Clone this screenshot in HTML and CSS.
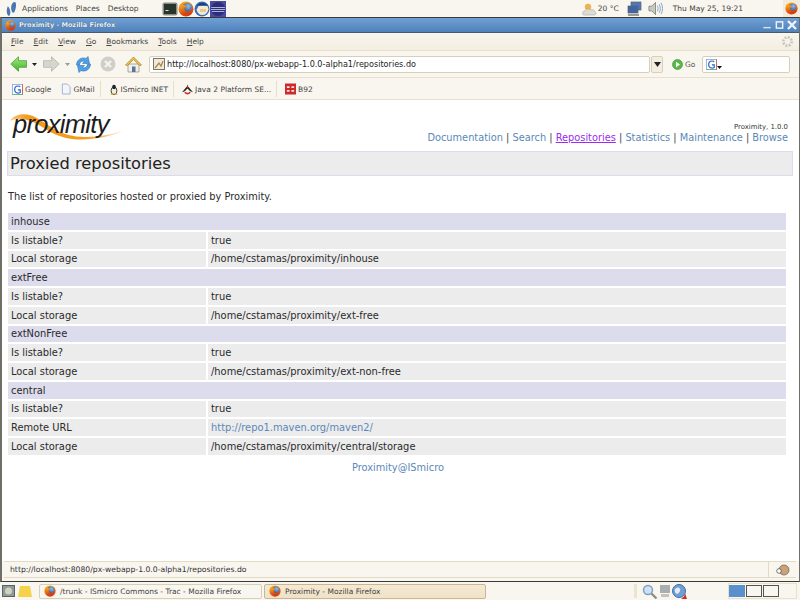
FILE: index.html
```html
<!DOCTYPE html>
<html lang="en">
<head>
    <meta charset="UTF-8">
    <title>Proximity - Mozilla Firefox</title>
    <link rel="stylesheet" href="styles.css">
</head>
<body>
    <svg class="defs" width="0" height="0">
        <defs>
            <radialGradient id="fox-globe" cx="0.6" cy="0.35" r="0.7">
                <stop offset="0" stop-color="#8fc0ec"/>
                <stop offset="1" stop-color="#24509e"/>
            </radialGradient>
            <linearGradient id="fox-tail" x1="0" y1="0" x2="0.4" y2="1">
                <stop offset="0" stop-color="#f9b820"/>
                <stop offset="1" stop-color="#d63c0e"/>
            </linearGradient>
            <linearGradient id="swoosh-fade" x1="0" y1="0" x2="1" y2="0">
                <stop offset="0" stop-color="#fbc77a"/>
                <stop offset="0.15" stop-color="#f59a1c"/>
                <stop offset="0.65" stop-color="#f59a1c"/>
                <stop offset="1" stop-color="#fbe3c4"/>
            </linearGradient>
            <linearGradient id="arrow-green" x1="0" y1="0" x2="0" y2="1">
                <stop offset="0" stop-color="#a4ec7c"/>
                <stop offset="1" stop-color="#3fb02e"/>
            </linearGradient>
            <symbol id="firefox" viewBox="0 0 16 16">
                <circle cx="8" cy="8" r="7.5" fill="url(#fox-tail)"/>
                <circle cx="9.3" cy="6.6" r="4.6" fill="url(#fox-globe)"/>
                <path d="M2 3c1 1 3 1 4 1 1.500 0 3 1 3 2.500C7.500 6 6 7 6.500 8.500c.6 2 3 2.500 5 1.500 1-.5 2-1.500 2.500-3 .3 2-.5 4.500-3 5.800C7 14.500 3 13 2 9.500 1.500 7 1.500 5 2 3z" fill="url(#fox-tail)"/>
            </symbol>
            <symbol id="gicon" viewBox="0 0 14 14">
                <rect x=".5" y=".5" width="13" height="13" fill="#fff" stroke="#7fa4dc"/>
                <path d="M.5 13.500h13" stroke="#5fb35f"/>
                <path d="M13.500.5v13" stroke="#d9483a"/>
                <path d="M10.500 3.500C9.700 2.800 8.800 2.500 7.800 2.500 5.300 2.500 3.400 4.500 3.400 7s1.800 4.500 4.300 4.500c1.100 0 2-.3 2.800-.8V7.500H7.500" fill="none" stroke="#2a5fc8" stroke-width="1.500"/>
            </symbol>
        </defs>
    </svg>

    <header class="panel">
        <div class="panel-left">
            <svg class="foot" width="12" height="16" viewBox="0 0 12 16"><path d="M1.500 6C.3 9 .5 14 3 15c1.700-1 1.800-5 .2-8C2.600 6 1.900 5 1.500 6zM8.500 1C6.200 1 4.800 5 5.300 8.500c.3 3 2.200 4.200 3.200 2.300C9.800 8.500 11.200 1 8.500 1z" fill="#4a76b0"/></svg>
            <span>Applications</span>
            <span>Places</span>
            <span>Desktop</span>
            <div class="launchers">
                <svg width="16" height="16" viewBox="0 0 16 16"><rect x=".5" y="1.500" width="15" height="13" rx="2" fill="#8b8d84"/><rect x="2" y="3" width="12" height="10" fill="#26362c"/><path d="M3.500 9.500h3" stroke="#dfe8dc"/></svg>
                <svg width="16" height="16"><use href="#firefox"/></svg>
                <svg width="16" height="16" viewBox="0 0 16 16"><circle cx="8" cy="8" r="7.5" fill="#3a6db8"/><path d="M2.500 9l2-4 9 0 1 3c-1 4-3 6-6 6-3 0-5-2-6-5z" fill="#f3ead2"/><path d="M3 5c2-4 8-4.500 11 0-3-1.500-7-1.500-11 0z" fill="#1f3f7c"/><path d="M6 8h6v3H6z" fill="#e9c98c"/></svg>
                <svg width="16" height="16" viewBox="0 0 16 16"><rect width="16" height="16" fill="#4a4a9e"/><circle cx="8" cy="8" r="7" fill="#2b2f78"/><path d="M1.200 6.500h13.600M1 8.500h14M1.800 10.500h12.400" stroke="#d4d6f4" stroke-width=".8"/></svg>
            </div>
        </div>
        <div class="panel-right">
            <svg width="15" height="14" viewBox="0 0 15 14"><circle cx="6" cy="5" r="3.200" fill="#eeb64a"/><path d="M2 13c-2 0-2-4 1-4 .5-2 4-3 5-1 2-1 5 0 5 2 2 1 1 3-1 3z" fill="#dcdcd6" stroke="#a8a8a0" stroke-width=".6"/></svg>
            <span class="temp">20 °C</span>
            <svg class="tray-net" width="15" height="16" viewBox="0 0 15 16"><rect x="4" y="1" width="10" height="8" fill="#4f78b4" stroke="#5a6470" stroke-width=".7"/><rect x="1" y="5" width="10" height="7" fill="#3f66a4" stroke="#5a6470" stroke-width=".7"/><path d="M1 13h11v2H1z" fill="#9a9a94"/></svg>
            <svg class="tray-vol" width="15" height="15" viewBox="0 0 16 15"><path d="M1 5h3l4-4v13l-4-4H1z" fill="#c9c9c2" stroke="#77776f" stroke-width=".8"/><path d="M10 4.500c1 2 1 4 0 6M12 3c1.500 3 1.500 6 0 9M14 1.500c2 4 2 8 0 12" fill="none" stroke="#7f9fc8"/></svg>
            <span class="clock">Thu May 25, 19:21</span>
            <div class="panel-fox"><svg width="13" height="13"><use href="#firefox"/></svg></div>
        </div>
    </header>

    <div class="window">
        <div class="titlebar">
            <svg width="11" height="11"><use href="#firefox"/></svg>
            <span class="title-text">Proximity - Mozilla Firefox</span>
            <div class="title-btns">
                <svg width="9" height="10" viewBox="0 0 10 10"><path d="M0 7h9v2H0z" fill="#eef2f6" stroke="#56779f" stroke-width=".5"/></svg>
                <svg width="9" height="10" viewBox="0 0 10 10"><rect x="1.500" y="1.500" width="7" height="7" fill="none" stroke="#eef2f6" stroke-width="1.600"/></svg>
                <svg width="10" height="10" viewBox="0 0 10 10"><path d="M1 1l8 8M9 1L1 9" stroke="#eef2f6" stroke-width="2.400"/></svg>
            </div>
        </div>

        <div class="menubar">
            <span><u>F</u>ile</span>
            <span><u>E</u>dit</span>
            <span><u>V</u>iew</span>
            <span><u>G</u>o</span>
            <span><u>B</u>ookmarks</span>
            <span><u>T</u>ools</span>
            <span><u>H</u>elp</span>
            <svg class="throbber" width="13" height="13" viewBox="0 0 14 14"><circle cx="7" cy="7" r="4.500" fill="none" stroke="#c4c4bb" stroke-width="2.800" stroke-dasharray="2 1.500"/></svg>
        </div>

        <div class="navbar">
            <svg class="nav-back" width="17" height="16" viewBox="0 0 17 16"><path d="M.8 8l7.700-7.300v4h8v6.600h-8v4z" fill="url(#arrow-green)" stroke="#4d9e3c" stroke-width=".8"/></svg>
            <svg class="caret" width="5" height="3" viewBox="0 0 5 3"><path d="M0 0h5L2.500 3z" fill="#222"/></svg>
            <svg class="nav-fwd" width="17" height="16" viewBox="0 0 17 16"><path d="M16.200 8L8.500.7v4h-8v6.600h8v4z" fill="#d6d6ce" stroke="#b4b4aa" stroke-width=".8"/></svg>
            <svg class="caret" width="5" height="3" viewBox="0 0 5 3"><path d="M0 0h5L2.500 3z" fill="#9a9a94"/></svg>
            <svg class="nav-reload" width="17" height="17" viewBox="0 0 17 17"><path d="M1.500 9c0-5 5-8.500 9.500-6.500L13 .5l1.500 7H7.500l2-2C7 4.500 4.500 6 4.500 9z" fill="#4f9fe4" stroke="#2f74bc" stroke-width=".6"/><path d="M15.500 8c0 5-5 8.500-9.500 6.500L4 16.500l-1.500-7h7l-2 2c2.500 1 5-.5 5-3.500z" fill="#4f9fe4" stroke="#2f74bc" stroke-width=".6"/></svg>
            <svg class="nav-stop" width="16" height="16" viewBox="0 0 16 16"><circle cx="8" cy="8" r="7.500" fill="#cfcfc8"/><path d="M5 5l6 6M11 5l-6 6" stroke="#f4f4ef" stroke-width="2.200"/></svg>
            <svg class="nav-home" width="17" height="17" viewBox="0 0 17 17"><path d="M3 8v8h11V8z" fill="#f2f0ea" stroke="#8a8a80" stroke-width=".7"/><path d="M.5 9L8.500 1l8 8-2 .5-6-6-6 6z" fill="#f0c44a" stroke="#a57f22" stroke-width=".7"/><rect x="7" y="10.500" width="3.500" height="5.500" fill="#5f7396"/></svg>
            <div class="urlbar">
                <svg width="12" height="12" viewBox="0 0 12 12"><rect x=".5" y=".5" width="11" height="11" fill="#f0ead8" stroke="#77776f"/><path d="M2 10l4-5 2 3 2-5" fill="none" stroke="#a8874a" stroke-width="1.300"/></svg>
                <span>http://localhost:8080/px-webapp-1.0.0-alpha1/repositories.do</span>
            </div>
            <div class="url-drop"><svg width="7" height="5" viewBox="0 0 7 5"><path d="M0 0h7L3.500 5z" fill="#222"/></svg></div>
            <svg class="go-icon" width="11" height="11" viewBox="0 0 11 11"><circle cx="5.500" cy="5.500" r="5" fill="#58b948" stroke="#3b8c2e" stroke-width=".6"/><path d="M4 2.800l4 2.700-4 2.700z" fill="#fff"/></svg>
            <span class="go-label">Go</span>
            <div class="searchbar">
                <svg width="11" height="11"><use href="#gicon"/></svg>
                <svg class="search-caret" width="5" height="3" viewBox="0 0 5 3"><path d="M0 0h5L2.500 3z" fill="#111"/></svg>
            </div>
        </div>

        <div class="bookmarks">
            <div class="bm"><svg width="11" height="11"><use href="#gicon"/></svg>Google</div>
            <div class="bm"><svg width="10" height="12" viewBox="0 0 11 12"><path d="M1.500.5h5.500l3 3v8h-8.500z" fill="#f2f5fa" stroke="#9db0cc"/></svg>GMail</div>
            <div class="bm-sep"></div>
            <div class="bm"><svg width="10" height="13" viewBox="0 0 12 13"><ellipse cx="6" cy="8" rx="3.500" ry="4.500" fill="#f1efe6" stroke="#222"/><ellipse cx="6" cy="3.500" rx="2.200" ry="2.800" fill="#222"/><path d="M2 12h3M7 12h3" stroke="#e9a81e" stroke-width="1.500"/></svg>ISmicro INET</div>
            <div class="bm-sep"></div>
            <div class="bm"><svg width="11" height="11" viewBox="0 0 12 12"><path d="M0 9l6-7 6 7-3-1-3-3-3 3z" fill="#222"/><path d="M3 9c2 2 4 2 6 0" stroke="#c8322a" fill="none" stroke-width="1.600"/><path d="M6 1v4" stroke="#c8322a"/></svg>Java 2 Platform SE...</div>
            <div class="bm-sep"></div>
            <div class="bm"><svg width="11" height="12" viewBox="0 0 12 12"><rect width="12" height="12" fill="#cc2b2b"/><path d="M2 3h3v2H2zM7 3h3v2H7zM2 7h3v2H2zM7 7h3v2H7z" fill="#f6dede"/></svg>B92</div>
        </div>

        <main class="content">
            <div class="page-head">
                <div class="logo">
                    <svg class="swoosh" width="116" height="30" viewBox="0 0 116 30"><path d="M0 9C4 2 15 0 25 5 40 13 50 25 75 25 90 25 105 22 115 18 100 25 80 29 62 27 45 25 35 16 25 11 17 7 7 5 0 9z" fill="url(#swoosh-fade)"/></svg>
                    <span class="logo-text">proximity</span>
                </div>
                <div class="head-right">
                    <div class="version">Proximity, 1.0.0</div>
                    <nav class="topnav">
                        <a href="#">Documentation</a> |
                        <a href="#">Search</a> |
                        <a href="#" class="current">Repositories</a> |
                        <a href="#">Statistics</a> |
                        <a href="#">Maintenance</a> |
                        <a href="#">Browse</a>
                    </nav>
                </div>
            </div>

            <h1>Proxied repositories</h1>
            <p class="intro">The list of repositories hosted or proxied by Proximity.</p>

            <table class="repos">
                <colgroup><col class="key-col"><col></colgroup>
                <tr><th colspan="2">inhouse</th></tr>
                <tr><td>Is listable?</td><td>true</td></tr>
                <tr><td>Local storage</td><td>/home/cstamas/proximity/inhouse</td></tr>
                <tr><th colspan="2">extFree</th></tr>
                <tr><td>Is listable?</td><td>true</td></tr>
                <tr><td>Local storage</td><td>/home/cstamas/proximity/ext-free</td></tr>
                <tr><th colspan="2">extNonFree</th></tr>
                <tr><td>Is listable?</td><td>true</td></tr>
                <tr><td>Local storage</td><td>/home/cstamas/proximity/ext-non-free</td></tr>
                <tr><th colspan="2">central</th></tr>
                <tr><td>Is listable?</td><td>true</td></tr>
                <tr><td>Remote URL</td><td><a href="#">http://repo1.maven.org/maven2/</a></td></tr>
                <tr><td>Local storage</td><td>/home/cstamas/proximity/central/storage</td></tr>
            </table>

            <div class="foot-link"><a href="#">Proximity@ISmicro</a></div>
        </main>

        <div class="statusbar">
            <span>http://localhost:8080/px-webapp-1.0.0-alpha1/repositories.do</span>
            <div class="status-end"><svg width="14" height="12" viewBox="0 0 14 12"><circle cx="8" cy="6" r="5" fill="#c9a27a" stroke="#6f5a44" stroke-width=".7"/><circle cx="3" cy="7" r="2.300" fill="#fff" stroke="#444" stroke-width=".7"/></svg></div>
        </div>
    </div>

    <footer class="taskbar">
        <div class="show-desk"><svg width="13" height="12" viewBox="0 0 13 12"><rect x=".5" y=".5" width="12" height="11" fill="#8a9a9e" stroke="#59646a"/><circle cx="6.500" cy="6" r="3.500" fill="#d5d1b8"/></svg></div>
        <svg class="notes" width="14" height="11" viewBox="0 0 14 11"><path d="M2 0h10l2 11H0z" fill="#f4d24a"/></svg>
        <div class="task first"><svg width="12" height="12"><use href="#firefox"/></svg><span>/trunk - ISmicro Commons - Trac - Mozilla Firefox</span></div>
        <div class="task active"><svg width="12" height="12"><use href="#firefox"/></svg><span>Proximity - Mozilla Firefox</span></div>
        <div class="tray">
            <div class="grip"></div>
            <svg width="16" height="15" viewBox="0 0 16 15"><circle cx="6" cy="6" r="4.500" fill="#cfe0f2" stroke="#7f9fc4" stroke-width="1.500"/><path d="M9.500 9.500l5 5" stroke="#8a8a84" stroke-width="2.200"/></svg>
            <svg width="10" height="12" viewBox="0 0 10 12"><rect width="10" height="8" fill="#a9aeb0"/><rect x="1" y="9" width="8" height="3" fill="#c4c4be"/></svg>
            <svg width="15" height="15" viewBox="0 0 15 15"><circle cx="7" cy="7" r="6.500" fill="#6f9fd6" stroke="#3f6fa8"/><path d="M3 5c2-2 4-2 5 0s-2 5-3 5-3-3-2-5z" fill="#e4ecf4"/><path d="M13 9c0 3-2 5-4 5l1.500 1H15z" fill="#c8322a"/></svg>
        </div>
        <div class="pager">
            <div class="desk on"></div>
            <div class="desk"></div>
            <div class="desk"></div>
        </div>
    </footer>
</body>
</html>
```

FILE: styles.css
```css
html, body {
    margin: 0;
    padding: 0;
}

body {
    width: 800px;
    height: 600px;
    overflow: hidden;
    display: flex;
    flex-direction: column;
    background-color: #f9f6ef;
    font-family: "DejaVu Sans", sans-serif;
    font-size: 7.5px;
    color: #44443f;
}

.defs {
    position: absolute;
}

svg {
    flex: none;
}

/* gnome panel */
.panel {
    height: 17px;
    flex: none;
    display: flex;
    justify-content: space-between;
    align-items: center;
}

.panel-left {
    display: flex;
    align-items: center;
    gap: 8px;
    padding-left: 6px;
}

.foot {
    margin-right: -4px;
}

.launchers {
    display: flex;
    margin-left: 15px;
}

.panel-right {
    display: flex;
    align-items: center;
}

.temp {
    margin-left: 1px;
}

.tray-net {
    margin-left: 8px;
}

.tray-vol {
    margin-left: 6px;
}

.clock {
    margin-left: 10px;
}

.panel-fox {
    margin-left: 40px;
    width: 17px;
    height: 17px;
    display: flex;
    align-items: center;
    justify-content: center;
    background-color: #f2ebdb;
}

/* window frame */
.window {
    height: 565px;
    flex: none;
    display: flex;
    flex-direction: column;
    box-sizing: border-box;
    border-top: 1px solid #3a3a36;
    border-bottom: 1px solid #3a3a36;
    border-left: 2px solid #6f6f68;
    border-right: 1px solid #6f6f68;
}

.titlebar {
    height: 14px;
    flex: none;
    display: flex;
    align-items: center;
    gap: 3px;
    padding: 0 2px 0 3px;
    background: linear-gradient(#6f9fd4, #4f82bb);
    border-bottom: 1px solid #4b5a6a;
}

.title-text {
    color: #eef1f4;
    font-weight: bold;
    font-size: 6.5px;
    text-shadow: 0 0 1px #2b3f58;
}

.title-btns {
    margin-left: auto;
    display: flex;
    gap: 3px;
}

.menubar {
    height: 17px;
    flex: none;
    display: flex;
    align-items: center;
    gap: 10px;
    padding-left: 9px;
    border-bottom: 1px solid #e8e0cd;
    background: linear-gradient(#f9f6ef, #f4eee1);
}

.throbber {
    margin-left: auto;
    margin-right: 5px;
}

.navbar {
    height: 27px;
    flex: none;
    display: flex;
    align-items: center;
    padding-left: 8px;
    box-sizing: border-box;
    border-bottom: 1px solid #e8e0cd;
}

.caret {
    margin-left: 5px;
}

.nav-fwd {
    margin-left: 6px;
}

.nav-reload {
    margin-left: 5px;
}

.nav-stop {
    margin-left: 8px;
}

.nav-home {
    margin-left: 9px;
}

.urlbar {
    width: 501px;
    height: 17px;
    margin-left: 7px;
    box-sizing: border-box;
    display: flex;
    align-items: center;
    gap: 2px;
    padding-left: 3px;
    background-color: #fff;
    border: 1px solid #d8cfb8;
    border-radius: 2px;
    color: #222;
    font-size: 8.1px;
}

.url-drop {
    width: 12px;
    height: 17px;
    margin-left: 1px;
    box-sizing: border-box;
    display: flex;
    align-items: center;
    justify-content: center;
    border: 1px solid #d8cfb8;
    border-radius: 2px;
    background-color: #f4eee1;
}

.go-icon {
    margin-left: 9px;
}

.go-label {
    margin-left: 2px;
    color: #55554f;
}

.searchbar {
    width: 88px;
    height: 17px;
    margin-left: 7px;
    box-sizing: border-box;
    display: flex;
    align-items: center;
    padding-left: 3px;
    background-color: #fff;
    border: 1px solid #d8cfb8;
    border-radius: 2px;
}

.search-caret {
    margin-top: 6px;
}

.bookmarks {
    height: 22px;
    flex: none;
    display: flex;
    align-items: center;
    gap: 6px;
    padding: 1px 0 0 8px;
    box-sizing: border-box;
    border-bottom: 1px solid #e8e0cd;
}

.bm {
    display: flex;
    align-items: center;
    gap: 2px;
    padding: 0 2px;
}

.bm-sep {
    width: 1px;
    height: 16px;
    margin-left: -3px;
    background-color: #e6dfcc;
}

/* page */
.content {
    flex: 1;
    padding: 0 7px 0 6px;
    background-color: #fff;
    color: #2a2a2a;
    font-size: 9.8px;
}

.content a {
    color: #5b88b8;
    text-decoration: none;
}

.page-head {
    height: 51px;
    display: flex;
    justify-content: space-between;
    align-items: flex-end;
}

.logo {
    position: relative;
    width: 116px;
    height: 34px;
    margin: 0 0 9px 2px;
}

.swoosh {
    position: absolute;
    left: 0;
    top: 4px;
}

.logo-text {
    position: absolute;
    left: 3px;
    top: 1px;
    font-family: "Liberation Sans", sans-serif;
    font-style: italic;
    font-size: 25.5px;
    letter-spacing: -0.7px;
    line-height: 30px;
    color: #1c1c1c;
}

.head-right {
    text-align: right;
    padding: 0 4px 8px 0;
}

.version {
    margin-bottom: 1px;
    font-size: 6.9px;
    line-height: 10px;
    color: #333;
}

.topnav {
    line-height: 10px;
    color: #444;
}

.content .topnav a.current {
    color: #9a2bf0;
    text-decoration: underline;
}

h1 {
    margin: 0 -1px;
    height: 25px;
    line-height: 23px;
    box-sizing: border-box;
    padding-left: 2px;
    background-color: #ececec;
    border: 1px solid #dddcec;
    font-size: 16.3px;
    font-weight: normal;
    color: #222;
}

.intro {
    margin: 14px 0 0 0;
    height: 13px;
    line-height: 13px;
}

.repos {
    width: 782px;
    margin: 8px 0 0 -2px;
    border-collapse: separate;
    border-spacing: 2px;
    table-layout: fixed;
}

.key-col {
    width: 198px;
}

.repos th,
.repos td {
    height: 16.75px;
    padding: 0 0 0 3px;
    font-size: 9.9px;
    font-weight: normal;
    text-align: left;
    background-color: #ececec;
}

.repos th {
    background-color: #dddcec;
}

.foot-link {
    margin-top: 3px;
    padding-right: 4px;
    text-align: center;
    line-height: 16px;
}

.statusbar {
    height: 17px;
    flex: none;
    display: flex;
    align-items: center;
    justify-content: space-between;
    box-sizing: border-box;
    padding-left: 6px;
    border-top: 1px solid #e3dac4;
    border-bottom: 1px solid #e3dac4;
    margin: 0 3px 3px 2px;
    font-size: 7.7px;
    color: #333;
}

.status-end {
    width: 27px;
    height: 100%;
    display: flex;
    align-items: center;
    justify-content: center;
    border-left: 1px solid #e3dac4;
}

/* bottom panel */
.taskbar {
    height: 18px;
    flex: none;
    display: flex;
    align-items: center;
    padding-left: 2px;
}

.show-desk {
    width: 13px;
    height: 14px;
    display: flex;
    align-items: center;
    justify-content: center;
}

.notes {
    margin-left: 3px;
}

.task {
    width: 222px;
    height: 15px;
    margin-left: 2px;
    box-sizing: border-box;
    display: flex;
    align-items: center;
    gap: 4px;
    padding-left: 4px;
    border: 1px solid #d8cfb8;
    border-radius: 2px;
}

.task.first {
    width: 223px;
    margin-left: 7px;
}

.task.active {
    background: linear-gradient(#f5e9d2, #f0e2c8);
    border-color: #c9b88f;
}

.tray {
    margin-left: auto;
    display: flex;
    align-items: center;
    gap: 2px;
    margin-right: 41px;
}

.grip {
    width: 3px;
    height: 14px;
    margin-right: 3px;
    background-color: #ece4d0;
}

.pager {
    width: 69px;
    height: 16px;
    box-sizing: border-box;
    display: flex;
    gap: 1px;
    padding: 1px 0 0 0;
    margin-right: 3px;
    border: 1px solid #e8e0cd;
}

.desk {
    width: 16px;
    height: 12px;
    box-sizing: border-box;
    border: 1px solid #55554f;
}

.desk.on {
    background-color: #5a90cc;
    border-color: #5a90cc;
}
```
